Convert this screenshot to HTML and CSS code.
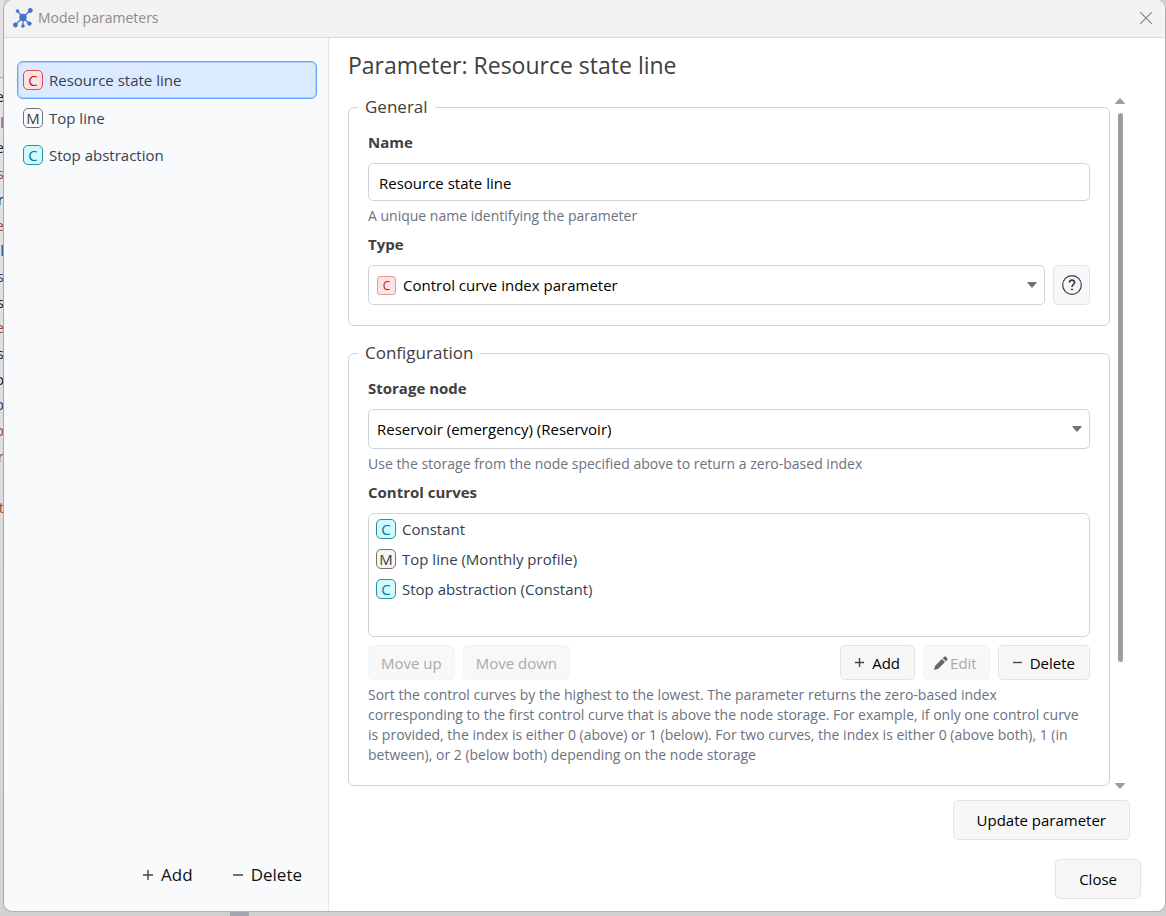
FILE: index.html
```html
<!DOCTYPE html>
<html lang="en">
<head>
<meta charset="utf-8">
<title>Model parameters</title>
<link rel="stylesheet" href="styles.css">
</head>
<body>
<div class="desktop">
  <div class="backdrop" aria-hidden="true">
    <div class="backdrop-lines"><span>e</span><span class="rust">l</span><span>e</span><span class="rust">s</span><span>r</span><span class="rust">e</span><span class="navy">l</span><span class="navy">s</span><span>s</span><span class="rust">e</span><span>s</span><span>o</span><span class="navy">p</span><span class="rust">o</span><span class="rust">r</span><span></span><span class="rust">t</span></div>
  </div>
  <div class="window">
    <header class="titlebar">
      <svg class="app-icon" viewBox="0 0 20 20" width="20" height="20" aria-hidden="true">
        <path d="M10 9.500 4.500 3M10 9.500 17.500 2M10 9.500 2 17M10 9.500 16.500 16M10 9.500V18" stroke="#4a78c2" stroke-width="1.300" fill="none"/>
        <g fill="#4472c4"><circle cx="10" cy="9.500" r="3.700"/><circle cx="4.500" cy="3" r="1.800"/><circle cx="17.300" cy="2.500" r="2.400"/><circle cx="2.400" cy="17" r="2.400"/><circle cx="16.400" cy="15.600" r="2.200"/><circle cx="10" cy="18" r="1.800"/></g>
      </svg>
      <h1 class="title">Model parameters</h1>
      <button class="close-x" aria-label="Close window"><svg viewBox="0 0 12 12" width="12" height="12"><path d="M0 0 12 12M12 0 0 12" stroke="#858585" stroke-width="1.200"/></svg></button>
    </header>
    <div class="body">
      <aside class="sidebar">
        <ul class="params">
          <li><button class="param selected"><span class="badge red">C</span>Resource state line</button></li>
          <li><button class="param"><span class="badge gray">M</span>Top line</button></li>
          <li><button class="param"><span class="badge cyan">C</span>Stop abstraction</button></li>
        </ul>
        <div class="side-actions">
          <button class="flat"><svg viewBox="0 0 10 10" width="10" height="10"><path d="M5 0V10M0 5H10" stroke="#444" stroke-width="1.400"/></svg>Add</button>
          <button class="flat"><svg viewBox="0 0 10 10" width="10" height="10"><path d="M0 5H10" stroke="#444" stroke-width="1.400"/></svg>Delete</button>
        </div>
      </aside>
      <main class="main">
        <h2 class="heading">Parameter: Resource state line</h2>
        <div class="scroll">
          <form class="form">
            <fieldset class="group">
              <legend>General</legend>
              <label class="label" for="name">Name</label>
              <input class="field" id="name" type="text" value="Resource state line">
              <p class="help">A unique name identifying the parameter</p>
              <label class="label next" for="type">Type</label>
              <div class="type-row">
                <div class="select-wrap">
                  <span class="badge small red">C</span>
                  <select class="select with-badge" id="type"><option>Control curve index parameter</option></select>
                  <svg class="arrow" viewBox="0 0 10 6" width="10" height="6"><path d="M1 0H9Q10 0 9.500 1L5.500 5.500Q5 6 4.500 5.500L.5 1Q0 0 1 0" fill="#6b7280"/></svg>
                </div>
                <button class="btn help-btn" type="button" aria-label="Help"><svg viewBox="0 0 20 20" width="20" height="20" fill="none" stroke="#374151"><circle cx="10" cy="10" r="9.300" stroke-width="1.200"/><path d="M7.400 7.600Q7.500 5.100 10 5.100T12.600 7.500C12.600 9.400 10 9.500 10 12" stroke-width="1.600"/><circle cx="10" cy="14.400" r=".6" fill="#374151"/></svg></button>
              </div>
            </fieldset>
            <fieldset class="group">
              <legend>Configuration</legend>
              <label class="label" for="node">Storage node</label>
              <div class="select-wrap">
                <select class="select" id="node"><option>Reservoir (emergency) (Reservoir)</option></select>
                <svg class="arrow" viewBox="0 0 10 6" width="10" height="6"><path d="M1 0H9Q10 0 9.500 1L5.500 5.500Q5 6 4.500 5.500L.5 1Q0 0 1 0" fill="#6b7280"/></svg>
              </div>
              <p class="help">Use the storage from the node specified above to return a zero-based index</p>
              <span class="label next" id="curves-label">Control curves</span>
              <ul class="curves" aria-labelledby="curves-label">
                <li><span class="badge cyan">C</span>Constant</li>
                <li><span class="badge gray filled">M</span>Top line (Monthly profile)</li>
                <li><span class="badge cyan">C</span>Stop abstraction (Constant)</li>
              </ul>
              <div class="tools">
                <button class="btn tool" type="button" disabled>Move up</button>
                <button class="btn tool" type="button" disabled>Move down</button>
                <span class="spacer"></span>
                <button class="btn tool add" type="button"><svg viewBox="0 0 10 10" width="9" height="9"><path d="M5 0V10M0 5H10" stroke="#444" stroke-width="1.500"/></svg>Add</button>
                <button class="btn tool edit" type="button" disabled><svg viewBox="0 0 14 14" width="14" height="14"><path d="M0 14 1.200 9.700 7.900 3 11 6.100 4.300 12.800ZM8.700 2.200 10.200.7Q11 0 11.800.7L13.300 2.200Q14 3 13.300 3.800L11.800 5.300Z" fill="#666"/></svg>Edit</button>
                <button class="btn tool del" type="button"><svg viewBox="0 0 10 10" width="9" height="9"><path d="M0 5H10" stroke="#444" stroke-width="1.500"/></svg>Delete</button>
              </div>
              <p class="help">Sort the control curves by the highest to the lowest. The parameter returns the zero-based index corresponding to the first control curve that is above the node storage. For example, if only one control curve is provided, the index is either 0 (above) or 1 (below). For two curves, the index is either 0 (above both), 1 (in between), or 2 (below both) depending on the node storage</p>
            </fieldset>
          </form>
          <div class="scrollbar" aria-hidden="true">
            <svg viewBox="0 0 10 6" width="10" height="6"><path d="M.5 6Q0 6 .3 5L4.400.5Q5 0 5.600.5L9.700 5Q10 6 9.500 6Z" fill="#9e9e9e"/></svg>
            <div class="track"><div class="thumb"></div></div>
            <svg viewBox="0 0 10 6" width="10" height="6"><path d="M.5 0Q0 0 .3 1L4.400 5.500Q5 6 5.600 5.500L9.700 1Q10 0 9.500 0Z" fill="#9e9e9e"/></svg>
          </div>
        </div>
        <div class="footer update"><button class="btn large">Update parameter</button></div>
        <div class="footer close"><button class="btn large">Close</button></div>
      </main>
    </div>
  </div>
</div>
</body>
</html>
```
FILE: styles.css
```css
* { box-sizing: border-box; }
body { margin: 0; }
body, button, input, select { font: 15px/20px "Open Sans", "Noto Sans", sans-serif; }
ul { list-style: none; margin: 0; padding: 0; }
p, h1, h2 { margin: 0; font-weight: 400; }
button { cursor: pointer; }

.desktop {
  height: 100vh;
  display: flex;
  padding-bottom: 4px;
  overflow: hidden;
  background: linear-gradient(#a3a7af, #a3a7af) 230px 100% / 19px 5px no-repeat, #d0d0d0;
}
.backdrop {
  width: 4px;
  flex: none;
  padding-top: 84px;
  overflow: hidden;
  background: linear-gradient(#e2e2e2 77px, #aaa 77px, #aaa 78px, #e4e4e4 78px, #d4d4d4);
  color: #222;
}
.backdrop-lines {
  height: 437px;
  display: grid;
  grid-template-columns: 4px;
  grid-auto-rows: 1fr;
  justify-items: end;
  line-height: 25px;
}
.backdrop .rust { color: #9a4a2a; }
.backdrop .navy { color: #2a3f78; }

.window {
  flex: 1;
  min-width: 0;
  display: flex;
  flex-direction: column;
  overflow: hidden;
  border: 1px solid #b5b5b5;
  border-width: 0 1px 1px 0;
  border-radius: 9px;
  box-shadow: -1px 0 0 #a8a8a8;
  background: #fff;
}
.titlebar {
  flex: none;
  height: 38px;
  display: flex;
  align-items: center;
  padding: 0 13px 2px 9px;
  gap: 5px;
  background: #f2f2f2;
  border-bottom: 1px solid #d9dbde;
}
.title { flex: 1; font-size: 14px; color: #8c8c8c; }
.close-x { display: flex; padding: 0; border: 0; background: none; }

.body { flex: 1; min-height: 0; display: flex; }
.sidebar {
  flex: none;
  width: 325px;
  display: flex;
  flex-direction: column;
  justify-content: space-between;
  padding: 23px 11px 20px 13px;
  background: #f8fafc;
  border-right: 1px solid #e2e5e9;
}
.param {
  display: flex;
  align-items: center;
  width: 100%;
  height: 37px;
  padding: 0 5px;
  gap: 6px;
  border: 1px solid transparent;
  border-radius: 6px;
  background: none;
  color: #374151;
}
.param.selected { height: 38px; background: #dbeafe; border: 1px solid #60a5fa; box-shadow: inset 0 0 0 1px #b4d4fe; }
.badge {
  flex: none;
  width: 20px;
  height: 20px;
  line-height: 18px;
  border: 1px solid;
  border-radius: 5px;
  text-align: center;
}
.badge.red { color: #b91c1c; background: #fee2e2; border-color: #dc4c55; }
.badge.gray { color: #44403c; border-color: #78716c; }
.badge.filled { background: #f5f5f4; }
.badge.cyan { color: #0e7490; background: #cffafe; border-color: #2a8fa5; }
.side-actions { display: flex; justify-content: flex-end; gap: 40px; padding-right: 15px; }
.flat {
  display: flex;
  align-items: center;
  gap: 8px;
  padding: 0;
  border: 0;
  background: none;
  font-size: 17px;
  line-height: 32px;
  color: #111;
}

.main { flex: 1; min-width: 0; display: flex; flex-direction: column; padding-left: 19px; }
.heading { margin: 11px 0 14px; font-size: 23px; line-height: 32px; color: #404040; }
.scroll { display: flex; padding-right: 40px; gap: 5px; }
.form { flex: 1; min-width: 0; display: flex; flex-direction: column; gap: 15px; }
.group {
  min-width: 0;
  margin: 0;
  padding: 13px 19px 20px;
  border: 1px solid #d4d4d8;
  border-radius: 6px;
}
.group legend { margin-left: -10px; padding: 0 7px; font-size: 17px; line-height: 24px; color: #404040; }
.label { display: block; margin-bottom: 11px; font-weight: 700; color: #404040; }
.label.next { margin-top: 8px; }
.field, .select {
  display: block;
  width: 100%;
  border: 1px solid #d1d5db;
  border-radius: 5px;
  background: #fff;
  color: #000;
  outline: 0;
}
.field { height: 38px; padding: 2px 10px 0; }
.select { height: 40px; padding: 0 8px; appearance: none; }
.select.with-badge { padding-left: 34px; }
.select-wrap { position: relative; flex: 1; }
.badge.small { position: absolute; left: 9px; top: 11px; width: 19px; height: 19px; line-height: 17px; border-radius: 3px; font-size: 12px; border-color: #e59a9a; }
.arrow { position: absolute; right: 8px; top: 17px; }
.help { margin-top: 5px; font-size: 14px; color: #6b7280; }
.type-row { display: flex; gap: 8px; }

.btn {
  display: flex;
  align-items: center;
  justify-content: center;
  border: 1px solid #e2e4e7;
  border-radius: 5px;
  background: #f7f7f7;
  color: #000;
}
.btn:disabled { border-color: #f4f4f4; background: #f8f8f8; color: #aaa; }
.help-btn { width: 37px; height: 40px; padding: 0; }
.curves {
  height: 124px;
  padding: 0 7px;
  border: 1px solid #d4d4d4;
  border-radius: 6px;
}
.curves li { display: flex; align-items: center; gap: 6px; height: 30px; color: #374151; }
.tools { display: flex; gap: 8px; margin-top: 8px; }
.spacer { flex: 1; }
.tool { height: 35px; padding: 0 12px; }
.add, .del { gap: 8px; padding: 0 14px; }
.edit { gap: 2px; padding: 0 12px 0 10px; }

.scrollbar { width: 10px; display: flex; flex-direction: column; align-items: center; gap: 9px; padding-top: 3px; margin-bottom: -3px; }
.scrollbar svg { flex: none; }
.track { flex: 1; }
.thumb { width: 5px; height: 83%; border-radius: 3px; background: #9e9e9e; }

.footer { display: flex; justify-content: flex-end; }
.large { height: 40px; padding: 0 23px; }
.update { padding: 14px 35px 0 0; }
.close { padding: 19px 24px 0 0; }
```
